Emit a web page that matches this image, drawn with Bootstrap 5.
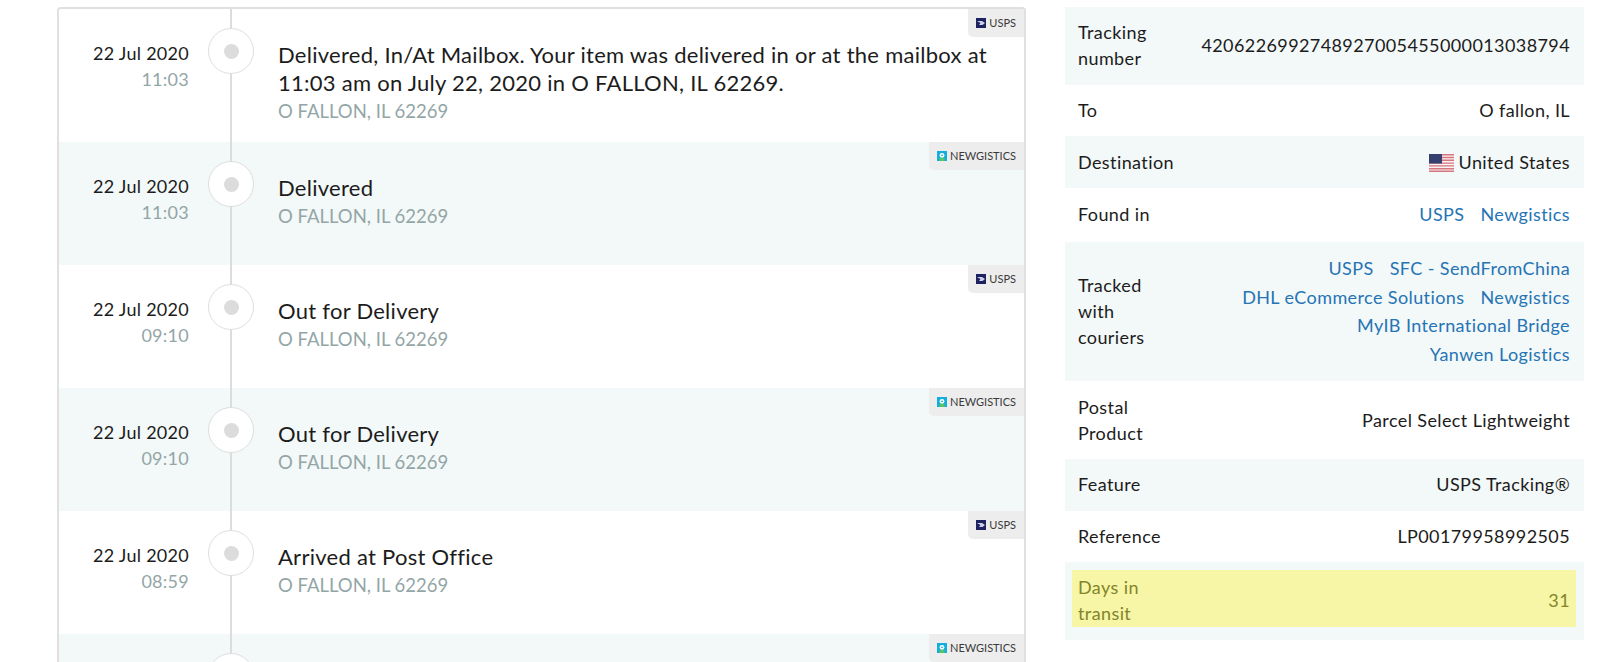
<!DOCTYPE html>
<html lang="en">
<head>
  <title>Tracking details</title>
  <meta charset="utf-8">
  <meta name="viewport" content="width=device-width, initial-scale=1">
  <link href="https://cdn.jsdelivr.net/npm/bootstrap@5.3.3/dist/css/bootstrap.min.css" rel="stylesheet">
  <script src="https://cdn.jsdelivr.net/npm/bootstrap@5.3.3/dist/js/bootstrap.bundle.min.js"></script>
  <style>
    html, body { height: 662px; overflow: hidden; }
    body { font-family: "Lato", "Liberation Sans", sans-serif; color: #1c1c1c; background: #fff; }
    .page-wrap { padding: 7px 16px 0 57px; gap: 39px; }

    /* timeline */
    .timeline { width: 969px; flex: none; border: 2px solid #e0e0e0; border-bottom: 0; border-radius: 4px 4px 0 0; }
    .event { position: relative; min-height: 123px; padding: 32px 18px 17px 0; }
    .event:nth-child(even) { background: #f3f8f8; }
    .event::before { content: ""; position: absolute; left: 171px; top: 0; bottom: 0; width: 2px; background: #dcdcdc; }
    .event-when { width: 130px; flex: none; margin-top: -1px; text-align: right; font-size: 18px; line-height: 26px; letter-spacing: .27px; }
    .event-time { color: #93a6a6; }
    .event-node { position: absolute; left: 149px; top: 19px; width: 46px; height: 46px; border: 1.5px solid #dedede; border-radius: 50%; background: #fff; }
    .event-dot { width: 15px; height: 15px; border-radius: 50%; background: #dcdcdc; }
    .event-body { margin-left: 89px; }
    .event-title { font-size: 22px; line-height: 28px; letter-spacing: .27px; }
    .event-place { color: #93a6a6; font-size: 18.5px; line-height: 28px; }
    .courier-tag { position: absolute; top: 0; right: 0; height: 28px; padding: 0 8px; gap: 3px; background: #ededed; border-bottom-left-radius: 5px; font-size: 11px; color: #3a3a3a; }

    /* details */
    .details { width: 519px; flex: none; font-size: 18px; line-height: 26px; letter-spacing: .4px; }
    .detail-row { padding: 12.4px 14px 13.2px 13px; }
    .detail-row:nth-child(odd) { background: #f3f8f8; }
    .detail-label { width: 90px; flex: none; }
    .detail-value { flex: 1; text-align: right; }
    .detail-value a { color: #2574b5; text-decoration: none; margin-left: 11px; white-space: nowrap; }
    .link-lines { line-height: 28.5px; }
    .detail-row.highlight-wrap { padding: 8px 8px 13px 7px; }
    .highlight { background: #f6f6a6; color: #84842a; padding: 3px 6px 0 6px; height: 57px; }
    .flag { width: 25px; height: 18px; margin-right: 5px; vertical-align: -3px; }
  </style>
</head>
<body>
  <div class="page-wrap d-flex align-items-start">

    <!-- Timeline -->
    <div class="timeline">
      <div class="event d-flex">
        <div class="event-when"><div>22 Jul 2020</div><div class="event-time">11:03</div></div>
        <div class="event-node d-flex align-items-center justify-content-center"><div class="event-dot"></div></div>
        <div class="event-body">
          <div class="event-title">Delivered, In/At Mailbox. Your item was delivered in or at the mailbox at 11:03 am on July 22, 2020 in O FALLON, IL 62269.</div>
          <div class="event-place">O FALLON, IL 62269</div>
        </div>
        <div class="courier-tag d-flex align-items-center">
          <svg width="10" height="10" viewBox="0 0 10 10"><rect width="10" height="10" fill="#1f2260"/><path d="M1 3h5l3 2-2.500 2H3l1.500-2z" fill="#cfd3e6"/></svg>
          <span>USPS</span>
        </div>
      </div>
      <div class="event d-flex">
        <div class="event-when"><div>22 Jul 2020</div><div class="event-time">11:03</div></div>
        <div class="event-node d-flex align-items-center justify-content-center"><div class="event-dot"></div></div>
        <div class="event-body">
          <div class="event-title">Delivered</div>
          <div class="event-place">O FALLON, IL 62269</div>
        </div>
        <div class="courier-tag d-flex align-items-center">
          <svg width="10" height="10" viewBox="0 0 10 10"><rect width="10" height="10" fill="#12aede"/><rect x="2.500" y="6.500" width="5" height="3.500" fill="#58c46a"/><circle cx="5" cy="4.300" r="2.400" fill="#fff"/><circle cx="5" cy="4.300" r=".9" fill="#12aede"/></svg>
          <span>NEWGISTICS</span>
        </div>
      </div>
      <div class="event d-flex">
        <div class="event-when"><div>22 Jul 2020</div><div class="event-time">09:10</div></div>
        <div class="event-node d-flex align-items-center justify-content-center"><div class="event-dot"></div></div>
        <div class="event-body">
          <div class="event-title">Out for Delivery</div>
          <div class="event-place">O FALLON, IL 62269</div>
        </div>
        <div class="courier-tag d-flex align-items-center">
          <svg width="10" height="10" viewBox="0 0 10 10"><rect width="10" height="10" fill="#1f2260"/><path d="M1 3h5l3 2-2.500 2H3l1.500-2z" fill="#cfd3e6"/></svg>
          <span>USPS</span>
        </div>
      </div>
      <div class="event d-flex">
        <div class="event-when"><div>22 Jul 2020</div><div class="event-time">09:10</div></div>
        <div class="event-node d-flex align-items-center justify-content-center"><div class="event-dot"></div></div>
        <div class="event-body">
          <div class="event-title">Out for Delivery</div>
          <div class="event-place">O FALLON, IL 62269</div>
        </div>
        <div class="courier-tag d-flex align-items-center">
          <svg width="10" height="10" viewBox="0 0 10 10"><rect width="10" height="10" fill="#12aede"/><rect x="2.500" y="6.500" width="5" height="3.500" fill="#58c46a"/><circle cx="5" cy="4.300" r="2.400" fill="#fff"/><circle cx="5" cy="4.300" r=".9" fill="#12aede"/></svg>
          <span>NEWGISTICS</span>
        </div>
      </div>
      <div class="event d-flex">
        <div class="event-when"><div>22 Jul 2020</div><div class="event-time">08:59</div></div>
        <div class="event-node d-flex align-items-center justify-content-center"><div class="event-dot"></div></div>
        <div class="event-body">
          <div class="event-title">Arrived at Post Office</div>
          <div class="event-place">O FALLON, IL 62269</div>
        </div>
        <div class="courier-tag d-flex align-items-center">
          <svg width="10" height="10" viewBox="0 0 10 10"><rect width="10" height="10" fill="#1f2260"/><path d="M1 3h5l3 2-2.500 2H3l1.500-2z" fill="#cfd3e6"/></svg>
          <span>USPS</span>
        </div>
      </div>
      <!-- last row is cut by the window, only its tag and node show -->
      <div class="event d-flex">
        <div class="event-node d-flex align-items-center justify-content-center"><div class="event-dot"></div></div>
        <div class="courier-tag d-flex align-items-center">
          <svg width="10" height="10" viewBox="0 0 10 10"><rect width="10" height="10" fill="#12aede"/><rect x="2.500" y="6.500" width="5" height="3.500" fill="#58c46a"/><circle cx="5" cy="4.300" r="2.400" fill="#fff"/><circle cx="5" cy="4.300" r=".9" fill="#12aede"/></svg>
          <span>NEWGISTICS</span>
        </div>
      </div>
    </div>

    <!-- Details -->
    <div class="details">
      <div class="detail-row d-flex align-items-center">
        <div class="detail-label">Tracking number</div>
        <div class="detail-value">4206226992748927005455000013038794</div>
      </div>
      <div class="detail-row d-flex align-items-center">
        <div class="detail-label">To</div>
        <div class="detail-value">O fallon, IL</div>
      </div>
      <div class="detail-row d-flex align-items-center">
        <div class="detail-label">Destination</div>
        <div class="detail-value">
          <svg class="flag" viewBox="0 0 25 18"><rect width="25" height="18" fill="#fbf3f3"/><path d="M0 .7h25M0 3.500h25M0 6.300h25M0 9.100h25M0 11.900h25M0 14.700h25M0 17.300h25" stroke="#d4757f" stroke-width="1.400"/><rect width="13" height="9.500" fill="#35406f"/></svg>United States
        </div>
      </div>
      <div class="detail-row d-flex align-items-center">
        <div class="detail-label">Found in</div>
        <div class="detail-value link-lines"><a href="#">USPS</a> <a href="#">Newgistics</a></div>
      </div>
      <div class="detail-row d-flex align-items-center">
        <div class="detail-label">Tracked with couriers</div>
        <div class="detail-value link-lines">
          <a href="#">USPS</a> <a href="#">SFC - SendFromChina</a><br>
          <a href="#">DHL eCommerce Solutions</a> <a href="#">Newgistics</a><br>
          <a href="#">MyIB International Bridge</a><br>
          <a href="#">Yanwen Logistics</a>
        </div>
      </div>
      <div class="detail-row d-flex align-items-center">
        <div class="detail-label">Postal Product</div>
        <div class="detail-value">Parcel Select Lightweight</div>
      </div>
      <div class="detail-row d-flex align-items-center">
        <div class="detail-label">Feature</div>
        <div class="detail-value">USPS Tracking®</div>
      </div>
      <div class="detail-row d-flex align-items-center">
        <div class="detail-label">Reference</div>
        <div class="detail-value">LP00179958992505</div>
      </div>
      <div class="detail-row highlight-wrap">
        <div class="highlight d-flex align-items-center">
          <div class="detail-label">Days in transit</div>
          <div class="detail-value">31</div>
        </div>
      </div>
    </div>

  </div>
</body>
</html>
